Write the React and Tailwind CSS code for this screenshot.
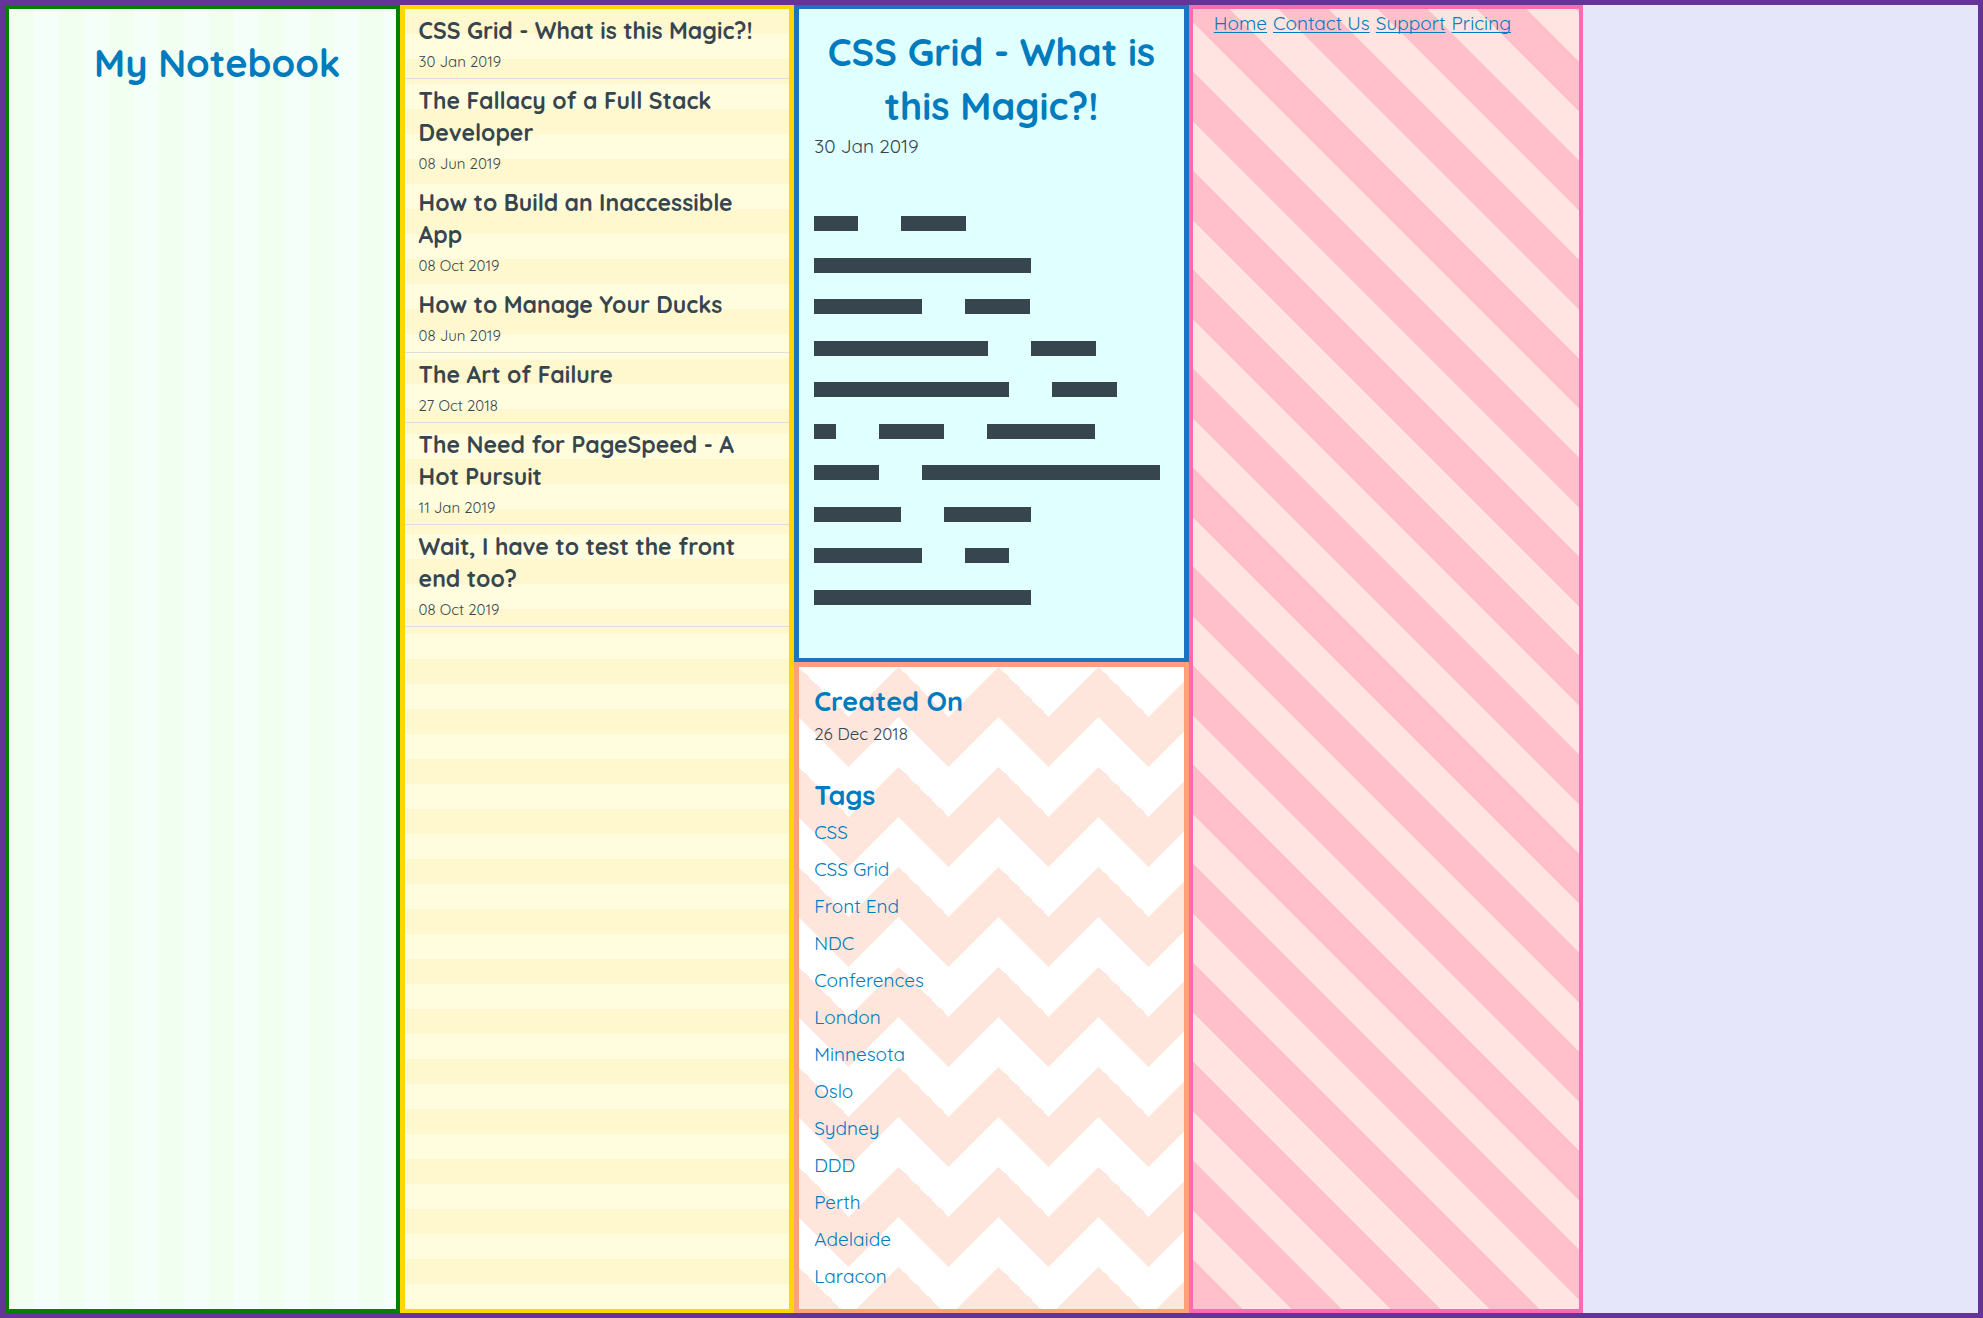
const notes = [
  { title: 'CSS Grid - What is this Magic?!', date: '30 Jan 2019', line: true },
  { title: 'The Fallacy of a Full Stack Developer', date: '08 Jun 2019', line: false },
  { title: 'How to Build an Inaccessible App', date: '08 Oct 2019', line: false },
  { title: 'How to Manage Your Ducks', date: '08 Jun 2019', line: true },
  { title: 'The Art of Failure', date: '27 Oct 2018', line: true },
  { title: 'The Need for PageSpeed - A Hot Pursuit', date: '11 Jan 2019', line: true },
  { title: 'Wait, I have to test the front end too?', date: '08 Oct 2019', line: true },
];

const bar = {
  1: 'w-[22px]',
  2: 'w-[44px]',
  3: 'w-[65px]',
  4: 'w-[87px]',
  5: 'w-[108px]',
  8: 'w-[174px]',
  9: 'w-[195px]',
  10: 'w-[217px]',
  11: 'w-[238px]',
};

const bodyRows = [[2, 3], [10], [5, 3], [8, 3], [9, 3], [1, 3, 5], [3, 11], [4, 4], [5, 2], [10]];

const tags = [
  'CSS', 'CSS Grid', 'Front End', 'NDC', 'Conferences', 'London', 'Minnesota',
  'Oslo', 'Sydney', 'DDD', 'Perth', 'Adelaide', 'Laracon',
];

const pages = ['Home', 'Contact Us', 'Support', 'Pricing'];

function Brand() {
  return (
    <header className="row-span-2 border-4 border-[#008000] bg-[repeating-linear-gradient(90deg,#f0fff0_0_25px,#f5fffa_25px_50px)] pl-[30px] pt-[27px]">
      <h1 className="text-center text-[38px] leading-[54px] font-bold text-[#007bbd]">My Notebook</h1>
    </header>
  );
}

function NoteList() {
  return (
    <section aria-label="Notes" className="row-span-2 border-x-5 border-y-4 border-[#ffd700] bg-[repeating-linear-gradient(180deg,#fff8cf_0_25px,#fffddd_25px_50px)]">
      <ul>
        {notes.map((n) => (
          <li
            key={n.title}
            className={'border-b px-[14px] pt-1.5 pb-1 ' + (n.line ? 'border-[#dddddd]' : 'border-transparent')}
          >
            <h2 className="text-[23px] leading-8 font-bold">{n.title}</h2>
            <p className="mt-[3px] text-[15px] leading-6">{n.date}</p>
          </li>
        ))}
      </ul>
    </section>
  );
}

function Note() {
  return (
    <article className="border-x-5 border-y-4 border-[#1c75bc] bg-[#e0ffff] px-[15px] pt-4 pb-[53px]">
      <h1 className="text-center text-[38px] leading-[54px] font-bold text-[#007bbd]">
        CSS Grid - What is this Magic?!
      </h1>
      <p className="mt-px text-[19px] leading-6">30 Jan 2019</p>
      <div className="mt-[58px] flex h-[389px] flex-col justify-between">
        {bodyRows.map((row, i) => (
          <div key={i} className="flex gap-[43px]">
            {row.map((n, j) => (
              <span key={j} className={'h-[15px] bg-[#37454f] ' + bar[n]} />
            ))}
          </div>
        ))}
      </div>
    </article>
  );
}

function Details() {
  return (
    <aside className="col-start-3 row-start-2 border-x-5 border-t-5 border-b-4 border-[#ffa07a] bg-[#ffe6dd] bg-[linear-gradient(135deg,#fff_25%,transparent_25%),linear-gradient(225deg,#fff_25%,transparent_25%),linear-gradient(315deg,#fff_25%,transparent_25%),linear-gradient(45deg,#fff_25%,transparent_25%)] bg-size-[100px_100px] bg-position-[-50px_0,-50px_0,0_0,0_0] px-[15px] pt-4">
      <h2 className="text-[27px] leading-9 font-bold text-[#007bbd]">Created On</h2>
      <p className="mt-[3px] text-[17px] leading-6">26 Dec 2018</p>
      <h2 className="mt-[31px] text-[27px] leading-9 font-bold text-[#007bbd]">Tags</h2>
      <ul className="pt-px">
        {tags.map((t) => (
          <li key={t} className="text-[19px] leading-[37px]">
            <a href="#tag" className="text-[#007bbd]">{t}</a>
          </li>
        ))}
      </ul>
    </aside>
  );
}

function SiteNav() {
  return (
    <nav className="col-start-4 row-span-2 row-start-1 border-4 border-[#ff69b4] bg-[repeating-linear-gradient(45deg,#ffc0cb_0_35px,#ffe4e1_35px_70px)] pt-0.5 pl-[21px]">
      <ul className="flex gap-1.5">
        {pages.map((p) => (
          <li key={p} className="leading-6">
            <a href="#page" className="block text-[19px] leading-6 text-[#007bbd] underline decoration-1 underline-offset-2 [text-decoration-skip-ink:none]">{p}</a>
          </li>
        ))}
      </ul>
    </nav>
  );
}

export default function App() {
  return (
    <main className="grid min-h-screen grid-cols-5 grid-rows-[auto_1fr] border-5 border-[#663399] bg-[#e6e6fa] font-[Quicksand,Lato,sans-serif] text-[#37454f]">
      <Brand />
      <NoteList />
      <Note />
      <Details />
      <SiteNav />
    </main>
  );
}
